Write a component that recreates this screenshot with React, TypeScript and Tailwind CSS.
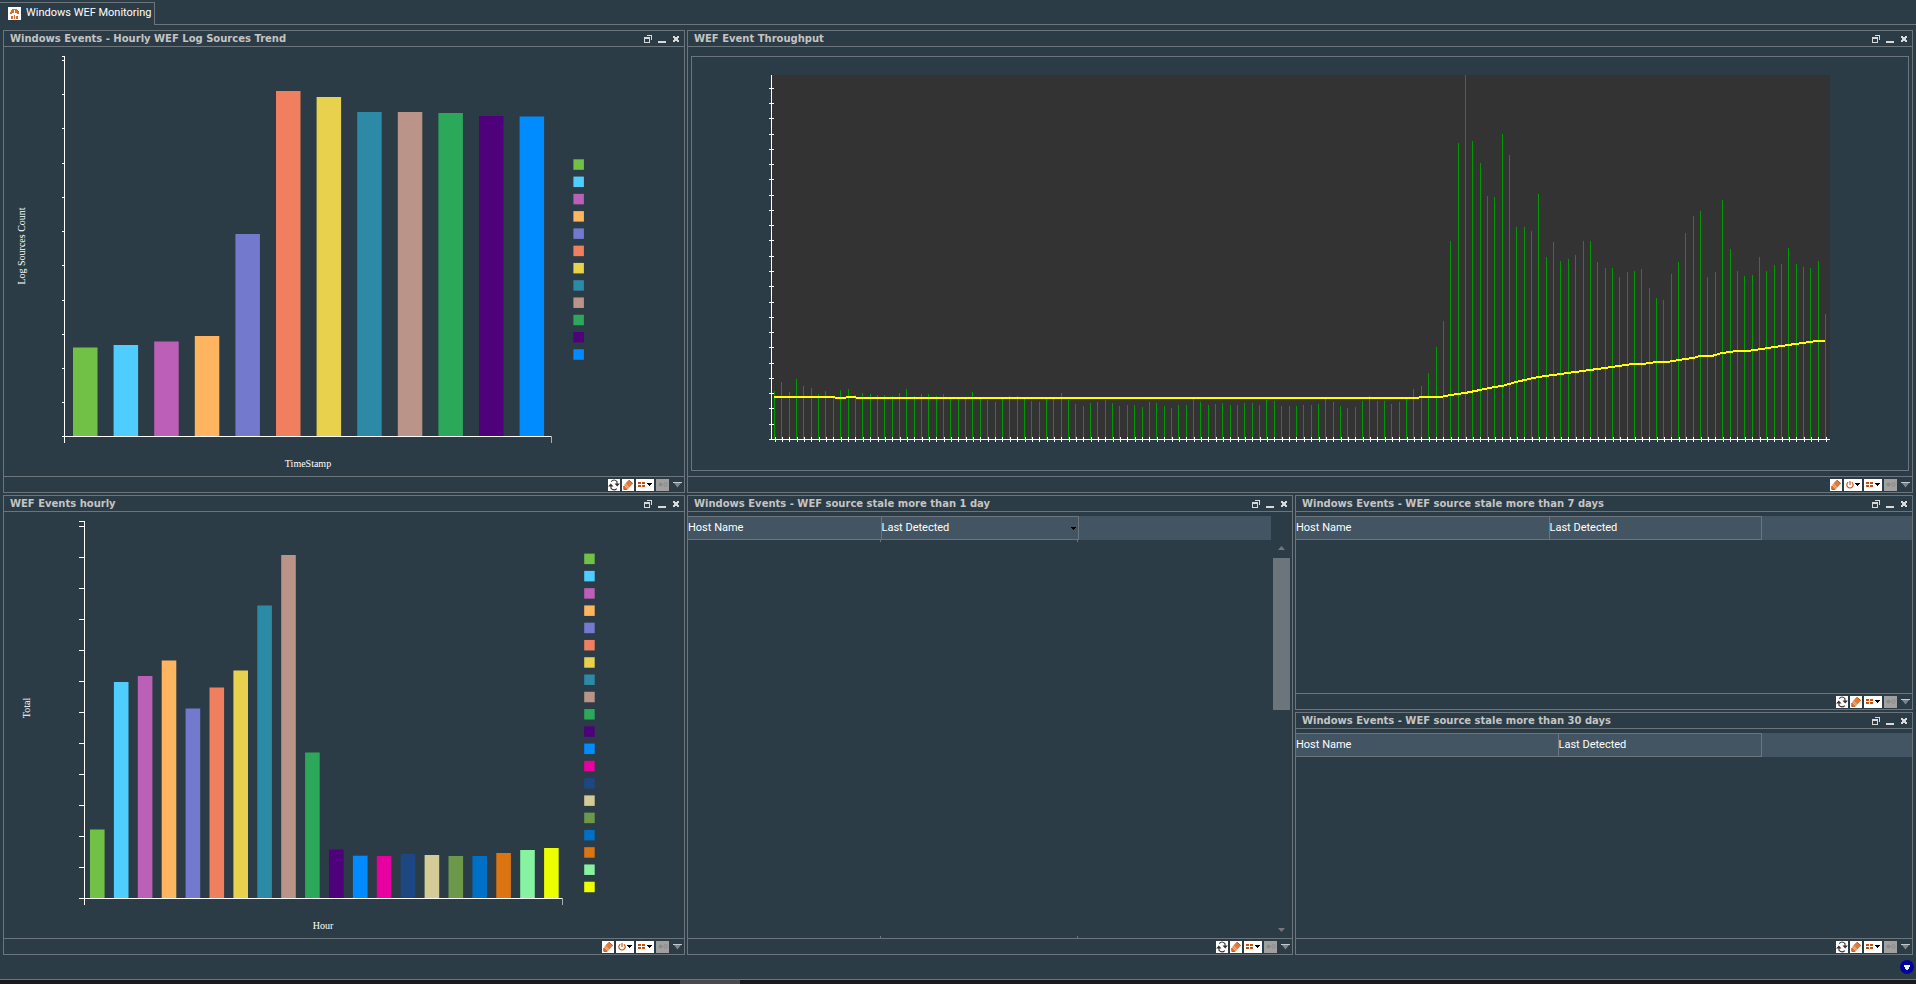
import type { ReactNode } from "react";

const PALETTE = [
  "#70c145", "#4fcdff", "#bb5fb7", "#ffb560", "#737acd", "#ef7f5f", "#e8d14c",
  "#2c8aa7", "#ba9489", "#2ca85b", "#4f007b", "#008bff", "#e6009f", "#1c4782",
  "#d5cb97", "#6d984a", "#0070c6", "#db7512", "#87f29f", "#ebff00",
];

const LOG_SOURCES = [88.5, 91, 94.5, 100, 202, 345, 339, 324, 324, 323, 320, 319.5];

const HOURLY_EVENTS = [
  68.5, 216, 222, 237.5, 189.5, 210.5, 227.5, 292.5, 343, 145.5, 48.5, 42.3,
  42, 44, 43, 42, 42, 45, 48, 50,
];

const THROUGHPUT = [
  48, 57, 47, 60, 53, 51, 45, 48, 42, 49, 50, 44, 46, 45, 44, 44, 43, 46, 50, 43,
  45, 45, 43, 45, 41, 41, 41, 47, 41, 39, 37, 41, 43, 43, 41, 38, 37, 41, 41, 46,
  39, 35, 33, 36, 37, 39, 36, 33, 34, 34, 32, 37, 36, 33, 31, 34, 34, 41, 37, 34,
  35, 36, 34, 34, 36, 36, 34, 39, 38, 33, 33, 33, 34, 34, 35, 41, 37, 33, 31, 32,
  38, 43, 38, 38, 35, 37, 41, 50, 53, 66, 92, 118, 198, 296, 364, 298, 276, 243,
  242, 305, 284, 212, 212, 208, 245, 182, 197, 178, 180, 184, 198, 198, 177, 171,
  171, 162, 167, 168, 170, 151, 141, 139, 165, 177, 206, 223, 228, 162, 167, 239,
  190, 168, 163, 164, 182, 168, 174, 175, 191, 175, 172, 171, 178, 125,
];

const AVERAGE =
  "82,340 142,340 144,341 153,341 155,340 163,340 165,341 726,341 728,340 749,340 758,338 773,336 788,333 802,330 810,329 824,325 846,320 861,318 898,313 941,307 951,307 964,305 975,305 993,302 1001,301 1008,299 1020,299 1030,296 1045,294 1056,294 1096,288 1125,284 1133,284";

type BarChartProps = {
  label: string;
  values: number[];
  height: number;
  axisX: number;
  axisTop: number;
  baseline: number;
  axisEnd: number;
  ticks: number[];
  tickLength: number;
  firstBar: number;
  pitch: number;
  barWidth: number;
  legendX: number;
  legendY: number;
  xLabel: string;
  xLabelX: number;
  xLabelY: number;
  yLabel: string;
  yLabelX: number;
  yLabelY: number;
};

function BarChart(p: BarChartProps) {
  return (
    <svg viewBox={`0 0 680 ${p.height}`} className="block h-auto w-full" role="img" aria-label={p.label}>
      {p.values.map((v, i) => (
        <rect key={i} x={p.firstBar + i * p.pitch} y={p.baseline - v} width={p.barWidth} height={v} fill={PALETTE[i]} />
      ))}
      {p.values.map((_, i) => (
        <rect key={i} x={p.legendX} y={p.legendY + i * 17.27} width={10.5} height={10.5} fill={PALETTE[i]} />
      ))}
      <g fill="#ffffff" shapeRendering="crispEdges">
        <rect x={p.axisX} y={p.axisTop} width={1} height={p.baseline + 7 - p.axisTop} />
        <rect x={p.axisX - p.tickLength} y={p.baseline} width={p.axisEnd - p.axisX + p.tickLength} height={1} />
        <rect x={p.axisEnd - 1} y={p.baseline} width={1} height={7} fill="#a9b0b4" />
        {p.ticks.map((y) => (
          <rect key={y} x={p.axisX - p.tickLength} y={y} width={p.tickLength} height={1} />
        ))}
      </g>
      <g fill="#ffffff" className="font-['Liberation_Serif',serif] text-[10px]" textAnchor="middle">
        <text x={p.xLabelX} y={p.xLabelY}>{p.xLabel}</text>
        <text transform={`translate(${p.yLabelX} ${p.yLabelY}) rotate(-90)`}>{p.yLabel}</text>
      </g>
    </svg>
  );
}

function ThroughputChart() {
  const ticks = Array.from({ length: 24 }, (_, i) => Math.round(382 - i * 15.27));
  return (
    <svg viewBox="0 0 1216 413" className="block h-auto w-full" role="img" aria-label="WEF event throughput">
      <g shapeRendering="crispEdges">
        <rect x={79} y={18} width={1059} height={364} fill="#333333" />
        {THROUGHPUT.map((v, i) => (
          <rect key={i} x={Math.round(82 + i * 7.35)} y={382 - v} width={1} height={v} fill="#009a00" />
        ))}
        <g fill="#ffffff">
          <rect x={79} y={18} width={1} height={365} />
          <rect x={79} y={382} width={1059} height={1} />
          {ticks.map((y) => (
            <rect key={y} x={77} y={y} width={5} height={1} />
          ))}
          {THROUGHPUT.map((_, i) => (
            <rect key={i} x={Math.round(82.6 + i * 7.35)} y={380} width={1} height={5} />
          ))}
        </g>
        <polyline points={AVERAGE} fill="none" stroke="#ffff00" strokeWidth={2} />
      </g>
    </svg>
  );
}

function Caret() {
  return (
    <svg viewBox="0 0 5 3" className="h-[3px] w-[5px]" shapeRendering="crispEdges">
      <path d="M0 0h5v1h-1v1h-1v1h-1v-1h-1v-1h-1z" fill="#000" />
    </svg>
  );
}

type Tool = "refresh" | "erase" | "power" | "grid" | "record";

function ToolButton({ tool }: { tool: Tool }) {
  if (tool === "refresh")
    return (
      <button aria-label="Refresh" className="flex size-3 items-center justify-center bg-white">
        <svg viewBox="0 0 12 12" className="size-3" fill="none" stroke="#3a3034" strokeWidth="1.1">
          <path d="M3.2 2.6Q6-.6 9 2.6V5M8.8 9.6Q6 12.4 3 9.4V7" />
          <path d="M6.5 4.6h5.4L9.2 7.4zM.1 7.4h5.4L2.8 4.6z" fill="#3a3034" stroke="none" />
        </svg>
      </button>
    );
  if (tool === "erase")
    return (
      <button aria-label="Clear" className="flex h-3 w-3 items-center justify-center bg-white">
        <svg viewBox="0 0 12 12" className="size-3">
          <path d="M6.5 1L11 4.5 6 10 1.8 10.4 2.2 6z" fill="#e07a3c" />
          <path d="M2.4 6.2L6 9.8M3.4 5L7.2 8.8" stroke="#fff" strokeWidth=".6" />
          <path d="M7 1.2L10.6 4.4M1.8 7v3.4h3.6" stroke="#c1500f" strokeWidth="1" fill="none" />
        </svg>
      </button>
    );
  if (tool === "power")
    return (
      <button aria-label="Power" className="flex h-3 w-[18px] items-center justify-between bg-white px-[2px]">
        <svg viewBox="0 0 8 8" className="size-2" fill="none" stroke="#c4500c" strokeWidth="1.1">
          <path d="M4 0v4M2.2 1.2a3.2 3.2 0 1 0 3.6 0" />
        </svg>
        <Caret />
      </button>
    );
  if (tool === "grid")
    return (
      <button aria-label="View" className="flex h-3 w-[18px] items-center justify-between bg-white px-[2px]">
        <svg viewBox="0 0 7 5" className="h-[5px] w-[7px]" fill="#c4500c" shapeRendering="crispEdges">
          <path d="M0 0h3v2h-3zM4 0h3v2h-3zM0 3h3v2h-3zM4 3h3v2h-3z" />
        </svg>
        <Caret />
      </button>
    );
  return (
    <button aria-label="Record" className="flex h-3 w-[13px] items-center justify-center bg-[#a0a0a0]">
      <svg viewBox="0 0 10 5" className="h-[5px] w-[10px]">
        <circle cx="2.5" cy="2.5" r="2" fill="#8a8a8a" />
        <circle cx="7.5" cy="2.5" r="1.7" fill="none" stroke="#8a8a8a" />
      </svg>
    </button>
  );
}

type PanelProps = { title: string; tools: Tool[]; className?: string; children: ReactNode };

function Panel({ title, tools, className = "", children }: PanelProps) {
  return (
    <section className={`flex min-w-0 flex-col border border-[#6b757b] ${className}`}>
      <header className="flex h-4 items-center justify-between border-b border-[#6b757b] pr-1 pl-[6px]">
        <h2 className="truncate font-['DejaVu_Sans',sans-serif] text-[10px] leading-[15px] font-bold text-[#c4c4c4]">{title}</h2>
        <div className="flex shrink-0 items-center gap-[6px]">
          <button aria-label="Restore">
            <svg viewBox="0 0 8 8" className="size-2" fill="#d8d8d8" shapeRendering="crispEdges">
              <path d="M3 0h5v5h-1v-4h-4zM0 2h6v6h-6zM1 4v3h4v-3z" fillRule="evenodd" />
            </svg>
          </button>
          <button aria-label="Minimize">
            <svg viewBox="0 0 8 8" className="size-2" fill="#d8d8d8" shapeRendering="crispEdges">
              <path d="M0 6h8v2h-8z" />
            </svg>
          </button>
          <button aria-label="Close">
            <svg viewBox="0 0 8 8" className="size-2" fill="#d8d8d8" shapeRendering="crispEdges">
              <path d="M1 1h2v1h2v-1h2v2h-1v2h1v2h-2v-1h-2v1h-2v-2h1v-2h-1z" />
            </svg>
          </button>
        </div>
      </header>
      <div className="flex flex-1 flex-col">{children}</div>
      <footer className="flex h-4 items-center justify-end gap-[2px] border-t border-[#6b757b] pr-[2px]">
        {tools.map((t) => (
          <ToolButton key={t} tool={t} />
        ))}
        <button aria-label="More" className="ml-[2px]">
          <svg viewBox="0 0 9 6" className="h-[6px] w-[9px]">
            <path d="M1 1h7L4.5 5.5z" fill="#7d878c" />
            <path d="M0 .5h9" stroke="#c4cacc" />
          </svg>
        </button>
      </footer>
    </section>
  );
}

function HostTable({ first, second, sorted = false }: { first: string; second: string; sorted?: boolean }) {
  return (
    <table className="mt-1 w-full table-fixed border-collapse bg-[#435462] text-left text-[11px] leading-4 text-white">
      <colgroup>
        <col className={first} />
        <col className={second} />
        <col />
      </colgroup>
      <thead>
        <tr className="h-[23px]">
          <th className="border-y border-r border-[#6b757b] p-0 font-normal">Host Name</th>
          <th className="border border-[#6b757b] p-0 font-normal">
            <div className="flex items-center justify-between pr-[2px]">
              Last Detected
              {sorted && <Caret />}
            </div>
          </th>
          <td aria-hidden="true" />
        </tr>
      </thead>
    </table>
  );
}

function ColumnMarks() {
  return (
    <div className="flex h-[2px]">
      <div className="w-[193px] border-r border-[#6b757b]" />
      <div className="w-[197px] border-r border-[#6b757b]" />
    </div>
  );
}

export default function App() {
  return (
    <div className="flex min-h-screen flex-col bg-[#2c3c46] font-[Roboto,sans-serif] text-[11px] text-white">
      <nav className="flex pt-[2px]">
        <a href="#monitoring" className="flex h-[23px] w-[155px] items-center gap-[5px] border-t border-r border-[#6b757b] pb-[1px] pl-2 text-[11px] whitespace-nowrap">
          <svg viewBox="0 0 13 13" className="size-[13px] shrink-0" shapeRendering="crispEdges">
            <path d="M0 0h13v13h-13z" fill="#fff" />
            <path d="M2 7v-2h1v-2h1v-1h5v1h1v1h1v3h-2v-1h-2v-2l-1-1v3h-2v1z" fill="#d96a2e" />
            <path d="M3 9h2v3h-2zM6 8h1v4h-1zM8 9h2v3h-2z" fill="#d96a2e" />
          </svg>
          Windows WEF Monitoring
        </a>
        <div className="flex-1 border-b border-[#6b757b]" />
      </nav>

      <main className="grid flex-1 grid-cols-[minmax(0,682fr)_minmax(0,1226fr)] grid-rows-[auto_1fr] gap-[2px] px-[3px] pt-[5px]">
        <Panel title="Windows Events - Hourly WEF Log Sources Trend" tools={["refresh", "erase", "grid", "record"]}>
          <BarChart
            label="Log sources count by hour"
            values={LOG_SOURCES}
            height={429}
            axisX={60}
            axisTop={9}
            baseline={389}
            axisEnd={548}
            ticks={[9, 13, 47, 81, 116, 150, 184, 218, 253, 287, 321, 355]}
            tickLength={2}
            firstBar={69}
            pitch={40.6}
            barWidth={24.5}
            legendX={569.4}
            legendY={112.3}
            xLabel="TimeStamp"
            xLabelX={304}
            xLabelY={420}
            yLabel="Log Sources Count"
            yLabelX={21}
            yLabelY={199}
          />
        </Panel>

        <Panel title="WEF Event Throughput" tools={["erase", "power", "grid", "record"]}>
          <div className="mx-[3px] mt-[9px] mb-[5px] flex-1 border border-[#6b757b]">
            <ThroughputChart />
          </div>
        </Panel>

        <Panel title="WEF Events hourly" tools={["erase", "power", "grid", "record"]}>
          <BarChart
            label="Total events by hour"
            values={HOURLY_EVENTS}
            height={426}
            axisX={80}
            axisTop={9}
            baseline={386}
            axisEnd={559}
            ticks={[9, 14, 45, 76, 107, 138, 169, 200, 231, 262, 293, 324, 355]}
            tickLength={5}
            firstBar={86}
            pitch={23.9}
            barWidth={14.6}
            legendX={580.2}
            legendY={41.6}
            xLabel="Hour"
            xLabelX={319}
            xLabelY={417}
            yLabel="Total"
            yLabelX={26}
            yLabelY={196}
          />
        </Panel>

        <div className="grid grid-cols-[minmax(0,606fr)_minmax(0,618fr)] gap-[2px]">
          <Panel title="Windows Events - WEF source stale more than 1 day" tools={["refresh", "erase", "grid", "record"]}>
            <div className="flex flex-1">
              <div className="flex min-w-0 flex-1 flex-col justify-between">
                <div>
                  <HostTable first="w-[193px]" second="w-[197px]" sorted />
                  <ColumnMarks />
                </div>
                <ColumnMarks />
              </div>
              <div className="flex w-[21px] flex-col items-center px-[2px] pt-[34px] pb-[6px]">
                <svg viewBox="0 0 7 4" className="h-1 w-[7px]" fill="#77777a"><path d="M0 4h7L3.5 0z" /></svg>
                <div className="mt-2 h-[152px] w-[17px] bg-[#6b757b]" />
                <svg viewBox="0 0 7 4" className="mt-auto h-1 w-[7px]" fill="#77777a"><path d="M0 0h7L3.5 4z" /></svg>
              </div>
            </div>
          </Panel>

          <div className="grid grid-rows-[215fr_243fr] gap-[2px]">
            <Panel title="Windows Events - WEF source stale more than 7 days" tools={["refresh", "erase", "grid", "record"]}>
              <HostTable first="w-[253px]" second="w-[212px]" />
            </Panel>
            <Panel title="Windows Events - WEF source stale more than 30 days" tools={["refresh", "erase", "grid", "record"]}>
              <HostTable first="w-[262px]" second="w-[203px]" />
            </Panel>
          </div>
        </div>
      </main>

      <div className="flex h-6 items-center justify-end pr-[2px]">
        <button aria-label="Scroll down">
          <svg viewBox="0 0 14 14" className="size-[14px]">
            <circle cx="7" cy="7" r="7" fill="#00009b" />
            <path d="M4 4.5h6v1.5L8 9.5v.5H6v-.5L4 6z" fill="#e4f4ff" shapeRendering="crispEdges" />
          </svg>
        </button>
      </div>
      <div className="flex h-[5px] border-t border-[#6b757b] bg-[#1a1a1a] pl-[680px]">
        <div className="w-[60px] bg-[#4a4a4a]" />
      </div>
    </div>
  );
}
